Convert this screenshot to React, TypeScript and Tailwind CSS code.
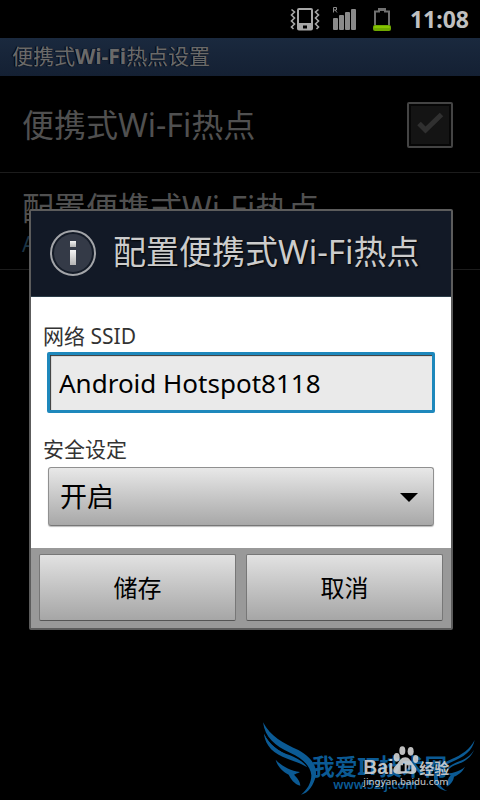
import React, { useState } from 'react';

const FONT = "font-['Noto_Sans','Noto_Sans_CJK_SC',sans-serif]";

function VibrateIcon() {
  return (
    <svg width="30" height="24" viewBox="0 0 30 24" fill="none" stroke="#a8a8a8" strokeWidth="1.6" aria-hidden="true">
      <path d="M1.5 2.5L4.5 5L1.5 8L4.5 11L1.5 14L4.5 17L1.5 20L3.5 22" />
      <path d="M28.5 2.5L25.5 5L28.5 8L25.5 11L28.5 14L25.5 17L28.5 20L26.5 22" />
      <path fill="#a8a8a8" stroke="none" fillRule="evenodd" d="M9 1H21Q23 1 23 3V21.500Q23 23.500 21 23.500H9Q7 23.500 7 21.500V3Q7 1 9 1ZM9 3V16H21V3ZM13 18.500V21.500H17V18.500Z" />
    </svg>
  );
}

function SignalIcon() {
  return (
    <svg width="26" height="26" viewBox="0 0 26 26" fill="#8a8a8a" aria-hidden="true">
      <path d="M1.500 6.500V1.500H4.500V4H1.500M3 4L5 6.500" fill="none" stroke="#8a8a8a" />
      <rect x="1" y="12" width="5" height="12" rx="1" />
      <rect x="7" y="9" width="5" height="15" rx="1" />
      <rect x="13" y="6" width="5" height="18" rx="1" />
      <rect x="19" y="3" width="5" height="21" rx="1" />
    </svg>
  );
}

function BatteryIcon() {
  return (
    <svg width="20" height="26" viewBox="0 0 20 26" aria-hidden="true">
      <path d="M3 19V5.500H7V3H13V5.500H17V19" fill="none" stroke="#707070" strokeWidth="2" />
      <rect x="6" y="2" width="8" height="3" fill="#707070" />
      <rect x="1" y="19" width="18" height="6" rx="2" fill="#6fa800" />
      <rect x="2" y="20" width="16" height="2" rx="1" fill="#86c400" />
    </svg>
  );
}

function InfoIcon() {
  return (
    <svg width="46" height="46" viewBox="0 0 46 46" aria-hidden="true">
      <defs>
        <linearGradient id="info" x1="0" y1="0" x2="0" y2="1">
          <stop offset="0" stopColor="#f4f4f4" />
          <stop offset="1" stopColor="#b4b4b4" />
        </linearGradient>
      </defs>
      <circle cx="23" cy="23" r="22" fill="#141b27" stroke="#a3a5a9" strokeWidth="2" />
      <circle cx="23" cy="23" r="19" fill="#343a47" />
      <rect x="20" y="11" width="6" height="6" fill="url(#info)" />
      <rect x="20" y="20" width="6" height="15" fill="url(#info)" />
    </svg>
  );
}

function Watermark() {
  return (
    <svg className="pointer-events-none absolute right-0 bottom-0 z-20" width="230" height="90" viewBox="0 0 690 270">
      <g fill="#0b5a94">
        <path d="M39 37C62 80 100 100 145 120C190 145 200 172 198 195C192 225 175 250 153 254C172 240 184 218 184 196C182 170 160 145 120 128C75 108 45 82 39 37Z" />
        <path d="M42 71C56 102 84 122 118 138C90 138 52 114 42 71Z" />
        <path d="M42 71C58 104 85 124 120 136C140 144 160 154 172 172C150 158 130 154 112 146C72 132 46 108 42 71Z" />
        <path d="M77 149C94 168 120 182 150 186C142 190 136 192 132 194C140 202 150 212 151 227C132 222 122 206 116 194C96 184 82 168 77 149Z" />
        <path d="M674 90C668 122 642 142 600 158C570 172 560 190 564 208C568 226 578 238 592 243C568 240 552 224 552 204C550 178 572 162 604 148C636 134 660 118 674 90Z" />
        <path d="M672 119C664 144 638 158 614 166C596 174 588 186 586 198C584 178 598 166 622 156C644 148 662 138 672 119Z" />
        <path d="M645 170C636 188 622 196 612 200C610 212 604 222 590 230C590 216 594 204 602 196C596 194 594 192 590 190C612 190 632 182 645 170Z" />
        <text x="186" y="195" fontSize="68" fontWeight="700" className={FONT}>我爱IT技术网</text>
        <text x="250" y="237" fontSize="37" fontWeight="600" className={FONT}>www.52ij.com</text>
      </g>
      <g fill="#d8d8d8" fillOpacity="0.88">
        <ellipse cx="440" cy="142" rx="9" ry="13" />
        <ellipse cx="457" cy="122" rx="9" ry="13" />
        <ellipse cx="482" cy="124" rx="9" ry="13" />
        <ellipse cx="497" cy="147" rx="8" ry="12" />
        <path fillRule="evenodd" d="M466 142C480 142 484 158 494 168C506 184 496 194 482 192Q466 188 450 192C430 194 424 180 436 168C448 158 450 142 466 142ZM452 166V184H464V160H459V166ZM470 166V184H484V166H479V179H475V166Z" />
        <text x="340" y="192" fontSize="58" fontWeight="700" className="font-['Liberation_Sans',sans-serif]">Bai</text>
        <text x="508" y="191" fontSize="45" fontWeight="700" className={FONT}>经验</text>
        <text x="340" y="224" fontSize="29" fontWeight="500" className={FONT}>jingyan.baidu.com</text>
      </g>
    </svg>
  );
}

export default function App() {
  const [enabled, setEnabled] = useState(true);
  const [ssid, setSsid] = useState('Android Hotspot8118');
  const [security, setSecurity] = useState('on');

  return (
    <div className={`relative min-h-screen overflow-hidden bg-black ${FONT}`}>
      <header className="flex h-[38px] items-center justify-end pr-[11px] text-[#c0c0c0]">
        <VibrateIcon />
        <span className="ml-3"><SignalIcon /></span>
        <span className="ml-[14px]"><BatteryIcon /></span>
        <time className="ml-[18px] text-[23px] font-bold">11:08</time>
      </header>

      <h1 className="flex h-[38px] items-center bg-linear-to-b from-[#1a293e] to-[#142033] px-3 text-[21px] text-[#6a6a6a] [text-shadow:-1px_0_1px_#000]">
        <span>便携式<b>Wi-Fi</b>热点设置</span>
      </h1>

      <main>
        <label className="flex h-[97px] items-center justify-between border-b border-[#1c1c1c] pt-[2px] pr-[27px] pl-[22px] text-[32px] text-[#505050]">
          便携式Wi-Fi热点
          <span className="relative">
            <input
              type="checkbox"
              checked={enabled}
              onChange={e => setEnabled(e.target.checked)}
              className="block size-[46px] appearance-none rounded-[2px] border-2 border-[#444] bg-[#141414] shadow-[inset_0_0_0_2px_#060606]"
            />
            {enabled && (
              <svg className="pointer-events-none absolute inset-0" width="46" height="46" viewBox="0 0 46 46" aria-hidden="true">
                <path d="M12 21.500L18.500 28L34.500 12.500" fill="none" stroke="#303030" strokeWidth="5" />
              </svg>
            )}
          </span>
        </label>
        <div className="h-[97px] border-b border-[#1c1c1c] px-[22px] pt-[13px] text-[#505050]">
          <p className="text-[32px] leading-[44px]">配置便携式Wi-Fi热点</p>
          <p className="text-[21px] leading-7 text-[#1c3444]">Android Hotspot8118</p>
        </div>
      </main>

      <div className="absolute inset-x-0 top-[38px] bottom-0 z-10 flex items-center pt-px pr-[27px] pl-[29px]">
        <div role="dialog" aria-labelledby="dialog-title" className="w-full rounded-[2px] border-2 border-[#5c5c5c]">
          <div className="flex h-[86px] items-center gap-[17px] border-b border-[#2b3c48] bg-[#121926] pb-[2px] pl-[19px]">
            <InfoIcon />
            <h2 id="dialog-title" className="pb-[2px] text-[33px] leading-[44px] text-[#ccc] [text-shadow:1px_1px_2px_#000]">配置便携式Wi-Fi热点</h2>
          </div>

          <div className="bg-white px-3 pt-[25px] pb-[22px] text-[21px] leading-7 text-[#333]">
            <label htmlFor="ssid" className="block">网络 SSID</label>
            <div className="px-1">
              <input
                id="ssid"
                type="text"
                value={ssid}
                onChange={e => setSsid(e.target.value)}
                className="mt-[2px] block h-[61px] w-full rounded-[2px] border-3 border-[#1e88bc] bg-[#eaeaea] px-[9px] text-[26px] text-black shadow-[inset_1px_1px_1px_#333] outline-none"
              />
            </div>
            <label htmlFor="security" className="mt-[22px] block">安全设定</label>
            <div className="relative px-[5px]">
              <select
                id="security"
                value={security}
                onChange={e => setSecurity(e.target.value)}
                className="mt-1 block h-[59px] w-full appearance-none rounded-[3px] border border-[#909090] border-b-[#777] bg-linear-to-b from-[#e8e8e8] to-[#a8a8a8] px-[11px] text-[27px] text-black shadow-[0_1px_1px_#bbb] outline-none"
              >
                <option value="on">开启</option>
                <option value="off">关闭</option>
              </select>
              <svg className="pointer-events-none absolute top-[26px] right-[21px]" width="18" height="9" viewBox="0 0 18 9" aria-hidden="true">
                <path d="M0 0H18L9 9Z" />
              </svg>
            </div>
          </div>

          <div className="flex gap-[10px] bg-[#999] px-2 pt-[6px] pb-[7px] text-2xl text-black">
            <button type="button" className="h-[67px] flex-1 rounded-[2px] border border-[#777] border-b-[#555] bg-linear-to-b from-[#e2e2e2] to-[#a6a6a6]">储存</button>
            <button type="button" className="h-[67px] flex-1 rounded-[2px] border border-[#777] border-b-[#555] bg-linear-to-b from-[#e2e2e2] to-[#a6a6a6]">取消</button>
          </div>
        </div>
      </div>

      <Watermark />
    </div>
  );
}
